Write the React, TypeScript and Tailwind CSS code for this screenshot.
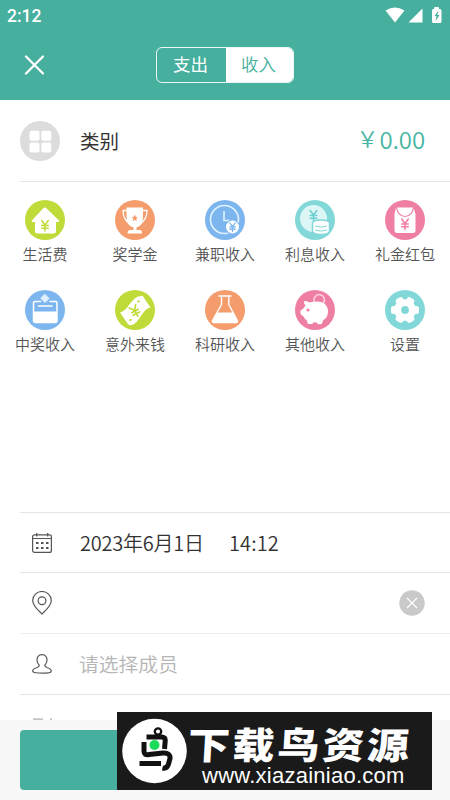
import type { ReactNode } from "react";

const Yen = (props: any) => (
  <path
    d="M-3-4.5 0-.5 3-4.5M0-.5V5M-3 0H3M-3 2.5H3"
    transform={`translate(${props.x} ${props.y}) scale(${props.s || 1}) rotate(${props.r || 0})`}
    fill="none"
    stroke={props.color}
    strokeWidth="1.4"
  />
);

const categories: { name: string; color: string; icon: ReactNode }[] = [
  {
    name: "生活费",
    color: "#bedb39",
    icon: (
      <>
        <path d="M20 7 34 20.5Q34.5 22 33 22H31V31Q31 33.5 28.500 33.500H12Q10 33.500 10 31V22H7.500Q6 22 6.800 20.500L18 8.500Q20 6.500 22 8.500Z" fill="#fff" />
        <Yen x={20} y={25.5} s={1.1} color="#bedb39" />
      </>
    ),
  },
  {
    name: "奖学金",
    color: "#f59c6c",
    icon: (
      <>
        <path d="M12.500 10.500H8Q8 20 15.500 24.500M27 10.500H32Q32 20 24.500 24.500" fill="none" stroke="#fff" strokeWidth="1.300" />
        <path d="M11.500 7.500H28V17Q28 26 21.500 27.500V30H25Q27 30 27 33.500H12.500Q12.500 30 15 30H18.500V27.500Q11.500 26 11.500 17Z" fill="#fff" />
        <path d="m19.800 15.500.8 1.600 1.800.3-1.300 1.300.3 1.800-1.600-.8-1.600.8.3-1.800-1.300-1.300 1.800-.3Z" fill="#f59c6c" stroke="#f59c6c" strokeWidth=".6" />
      </>
    ),
  },
  {
    name: "兼职收入",
    color: "#7db6ef",
    icon: (
      <>
        <circle cx="19.500" cy="19.500" r="14" fill="none" stroke="#e2f3ff" strokeWidth="1.600" />
        <path d="M19 11.500V20.500H24.500" fill="none" stroke="#e2f3ff" strokeWidth="1.600" />
        <circle cx="27.500" cy="27" r="7.500" fill="#7db6ef" />
        <circle cx="27.500" cy="27" r="6.500" fill="#fff" />
        <Yen x={27.500} y={27} s={0.900} color="#7db6ef" />
      </>
    ),
  },
  {
    name: "利息收入",
    color: "#82d8d8",
    icon: (
      <>
        <circle cx="18.500" cy="18.500" r="13.500" fill="#dcf6f6" />
        <Yen x={18.500} y={15.500} s={1.100} color="#6fcfcf" />
        <path d="M17.500 23.500Q17.500 20 26 20T34.500 23.500V30.500Q34.500 34.500 26 34.500T17.500 30.500Z" fill="#fff" stroke="#82d8d8" strokeWidth="1.500" />
        <path d="M20.500 26Q26 28 31.500 26M20.500 30Q26 32 31.500 30" fill="none" stroke="#82d8d8" strokeWidth="1.200" />
      </>
    ),
  },
  {
    name: "礼金红包",
    color: "#ee7fa3",
    icon: (
      <>
        <path d="M11 7.500H28.500L30.500 14V30Q30.500 33 28 33H12Q9.500 33 9.500 30V14Z" fill="#fff" />
        <path d="M11.500 7.500C12 12 15 16.500 20 16.500S28 12 28.500 7.500" fill="none" stroke="#ee7fa3" strokeWidth="1.200" />
        <Yen x={20} y={24} s={1.100} color="#ee7fa3" />
      </>
    ),
  },
  {
    name: "中奖收入",
    color: "#7db6ef",
    icon: (
      <>
        <path d="M15.500 11.500H10Q8.500 11.500 8.500 13V30.500Q8.500 32.500 10.500 32.500H30Q32 32.500 32 30.500V13Q32 11.500 30.500 11.500H25" fill="none" stroke="#fff" strokeWidth="1.500" />
        <path d="M9 21.500H32V30.500Q32 32.500 30 32.500H10.500Q9 32.500 9 31Z" fill="#fff" />
        <path d="M13.500 16H27" stroke="#fff" strokeWidth="1.600" />
        <path d="M20 4.500 24 8.500 20 12.500 16 8.500Z" fill="#dff0ff" stroke="#dff0ff" />
      </>
    ),
  },
  {
    name: "意外来钱",
    color: "#bedb39",
    icon: (
      <>
        <path d="M5 22.500C14 20.500 16 6.500 26 6Q28 5 29 8L35.500 17.500C27 19 25 33 16.500 35Q14 36 12.500 33.500Z" fill="#fff" />
        <Yen x={20} y={21} s={1.200} r={-28} color="#bedb39" />
        <ellipse cx="23.500" cy="11.500" rx="1.500" ry="1" transform="rotate(-35 23.500 11.500)" fill="#bedb39" />
        <ellipse cx="15.500" cy="30" rx="1.500" ry="1" transform="rotate(-45 15.500 30)" fill="#bedb39" />
      </>
    ),
  },
  {
    name: "科研收入",
    color: "#f59c6c",
    icon: (
      <>
        <path d="M14 6H26M16.500 6V14.500L7.500 30.500Q7 32.500 9 32.500H31Q33 32.500 32.300 30.500L23.800 14.500V6" fill="none" stroke="#fff" strokeWidth="1.400" />
        <path d="M12.500 22.500H28L32.500 31Q32.500 32.800 30.500 32.800H9.500Q7 32.800 8 30.500Z" fill="#fff" />
      </>
    ),
  },
  {
    name: "其他收入",
    color: "#ee7fa3",
    icon: (
      <>
        <path d="M19 11A5.300 5.300 0 1 1 28.500 13" fill="none" stroke="#ffd3e2" strokeWidth="1.500" />
        <path d="M9 11.500Q10 10.300 14.500 12.500 17 11.500 22 11.500C29.500 11.500 33 16 33 21.500 33 26 30.500 29 28 30.500L27 33.500Q26.500 34.500 25 34.200L22.500 34 22 32.500H18L17.500 34H13.500Q12 33.500 12 30.500 9.500 29 8.500 26.500L6 24.500Q5 23 5.500 20.500L8 19Q9 17 10.500 15.500Q8.500 13 9 11.500Z" fill="#fff" />
        <circle cx="13" cy="20" r="1.600" fill="#ee7fa3" />
      </>
    ),
  },
  {
    name: "设置",
    color: "#82d8d8",
    icon: (
      <>
        <g fill="#fff">
          <circle cx="20" cy="20" r="10.800" />
          <rect x="16" y="6.500" width="8" height="27" rx="2.500" transform="rotate(30 20 20)" />
          <rect x="16" y="6" width="8" height="28" rx="2.500" transform="rotate(90 20 20)" />
          <rect x="16" y="6.500" width="8" height="27" rx="2.500" transform="rotate(-30 20 20)" />
        </g>
        <circle cx="20" cy="20" r="3.900" fill="#82d8d8" />
      </>
    ),
  },
];

function StatusBar() {
  return (
    <div className="flex h-[30px] items-center justify-between pl-[7px] pr-2 text-white">
      <span className="pt-1 font-['Roboto',sans-serif] text-[17.500px] font-medium leading-none">2:12</span>
      <svg className="h-[17px] w-[57px]" viewBox="0 0 57 17" fill="#fff">
        <path d="M.5 3.500Q10 -2.500 19.500 3.500L10 15.500Z" />
        <path d="M37.500 1.500V15.500H23.500Z" />
        <path d="M49 2V1Q49 0 50 0H53Q54 0 54 1V2H55Q56.500 2 56.500 3.500V14.500Q56.500 16 55 16H48.500Q47 16 47 14.500V3.500Q47 2 48.500 2Z" />
        <path d="M53.500 3.500 49.500 9H51.500L50.500 14 54.500 8H52.300Z" fill="#46af9e" />
      </svg>
    </div>
  );
}

function Header() {
  return (
    <div className="h-[100px] bg-[#46af9e]">
      <StatusBar />
      <div className="flex h-[70px] items-center pl-6">
        <svg className="h-5 w-5" viewBox="0 0 20 20" stroke="#fff" strokeWidth="2.300" strokeLinecap="round">
          <path d="M2 1.500 19 18.500M19 1.500 2 18.500" />
        </svg>
        <div className="ml-28 flex h-9 w-[138px] overflow-hidden rounded-md border border-white/90 text-[17.500px]">
          <div className="flex w-[69px] items-center justify-center pb-0.5 pr-0.5 text-white">支出</div>
          <div className="flex flex-1 items-center justify-center bg-white pb-0.5 pr-0.5 font-[350] text-[#46af9e]">收入</div>
        </div>
      </div>
    </div>
  );
}

function Watermark() {
  return (
    <div className="absolute left-[117px] top-[712px] flex h-[78px] w-[315px] items-center bg-[#1a1a1a] text-white">
      <svg className="ml-[5px] h-[66px] w-[66px] shrink-0" viewBox="0 0 66 66">
        <circle cx="32.500" cy="33" r="32.300" fill="#fff" />
        <circle cx="36" cy="13.500" r="3.200" fill="none" stroke="#111" strokeWidth="2.300" />
        <path d="M24.500 19H40Q43.500 19.500 43.200 23L42.500 31M22 24V33.500Q22 37.500 27 36.500L41 35Q48.500 34.500 48 40.500L46.500 46Q45 51 40.500 50M17.500 45.500H39" fill="none" stroke="#111" strokeWidth="5" />
        <circle cx="32.500" cy="27" r="5" fill="#1bdc58" />
      </svg>
      <div className="relative h-full flex-1 whitespace-nowrap">
        <div className="absolute left-0 top-[7px] -skew-x-3 scale-y-[0.880] text-[42px] font-black leading-[48px] tracking-[2.800px]">下载鸟资源</div>
        <div className="absolute left-[14px] top-[55px] font-['Liberation_Sans',sans-serif] text-[22px] leading-[18px] tracking-[0.250px]">www.xiazainiao.com</div>
      </div>
    </div>
  );
}

export default function App() {
  return (
    <div className="relative flex h-[800px] w-[450px] flex-col overflow-hidden bg-white font-['Noto_Sans_CJK_SC',sans-serif] text-[#333]">
      <Header />
      <div className="ml-5 flex h-[82px] items-center border-b border-[#e5e5e5] pr-[25px]">
        <svg className="h-10 w-10" viewBox="0 0 40 40">
          <circle cx="20" cy="20" r="20" fill="#dcdcdc" />
          <g fill="#fff">
            <rect x="9.500" y="9.700" width="10" height="10" rx="2" />
            <rect x="21.300" y="9.700" width="10" height="10" rx="2" />
            <rect x="9.500" y="21.500" width="10" height="10" rx="2" />
            <rect x="21.300" y="21.500" width="10" height="10" rx="2" />
          </g>
        </svg>
        <span className="ml-5 text-[19.500px]">类别</span>
        <span className="ml-auto flex pb-[3px] text-2xl font-[350] text-[#46b5a2]">
          <span className="mr-px text-[22px]">￥</span>
          <span className="tracking-[-0.100px]">0.00</span>
        </span>
      </div>

      <div className="grid h-[330px] grid-cols-5 content-start pt-[18px]">
        {categories.map((item) => (
          <div className="flex h-[90px] flex-col items-center" key={item.name}>
            <svg className="h-10 w-10" viewBox="0 0 40 40" strokeLinecap="round" strokeLinejoin="round">
              <circle cx="20" cy="20" r="20" fill={item.color} />
              {item.icon}
            </svg>
            <span className="mt-1 text-[15px] font-[350] leading-5 text-[#555]">{item.name}</span>
          </div>
        ))}
      </div>

      <div className="ml-5 flex h-[61px] items-center border-y border-[#e5e5e5] pl-3">
        <svg className="h-5 w-5" viewBox="0 0 20 20" fill="none" stroke="#555" strokeWidth="1.200">
          <rect x=".6" y="1.800" width="18.800" height="17.600" rx="2" />
          <path d="M.6 5.500H19.400M4.700 0V3.500M15.700 0V3.500" />
          <path d="M4 10H6.500M9 10H11.500M14 10H16.500M4 15H6.500M9 15H11.500M14 15H16.500" strokeWidth="2.200" />
        </svg>
        <span className="ml-7 w-[149px] text-[20px] font-[350] tracking-[-0.250px]">2023年6月1日</span>
        <span className="text-[20px] font-[350] tracking-[0.100px]">14:12</span>
      </div>
      <div className="ml-5 flex h-[61px] items-center border-b border-[#eee] pl-3 pr-[25px]">
        <svg className="h-6 w-5" viewBox="0 0 20 24" fill="none" stroke="#555" strokeWidth="1.200">
          <path d="M10 23C7 20 .7 15 .7 9.500A9.300 9.000 0 0 1 19.300 9.500C19.300 15 13 20 10 23Z" />
          <circle cx="10" cy="9.800" r="3.900" />
        </svg>
        <svg className="ml-auto h-[26px] w-[26px]" viewBox="0 0 26 26">
          <circle cx="13" cy="13" r="12.700" fill="#c9c9c9" />
          <path d="M8 8 18 18M18 8 8 18" stroke="#fff" strokeWidth="1.200" />
        </svg>
      </div>
      <div className="ml-5 flex h-[61px] items-center border-b border-[#e5e5e5] pl-3">
        <svg className="h-5 w-5" viewBox="0 0 20 20" fill="none" stroke="#555" strokeWidth="1.200">
          <path d="M10 .7C13.500 .7 15.300 3.200 15 6.200 14.800 8.400 14 10 12.800 11.200 12.600 12.500 13.500 13 15.500 13.700 18 14.500 19.300 15.500 19.300 17.200 19.300 18.700 14 19.200 10 19.200S.7 18.700.7 17.200C.7 15.500 2 14.500 4.500 13.700 6.500 13 7.400 12.500 7.200 11.200 6 10 5.200 8.400 5 6.200 4.700 3.200 6.500.7 10 .7Z" />
        </svg>
        <span className="ml-[27px] text-[19.800px] font-[350] text-[#b5b5b5]">请选择成员</span>
      </div>
      <div className="flex h-[25px] items-end pl-[33px]">
        <svg className="h-0.5 w-5" viewBox="0 0 20 2" fill="#aaa">
          <rect width="10" height="1.200" y=".5" />
          <rect x="17" width="2" height="1.200" y=".5" />
        </svg>
      </div>

      <div className="flex flex-1 bg-[#f7f7f7] px-5 py-2.5">
        <div className="flex-1 rounded bg-[#46af9e]" />
      </div>
      <Watermark />
    </div>
  );
}
